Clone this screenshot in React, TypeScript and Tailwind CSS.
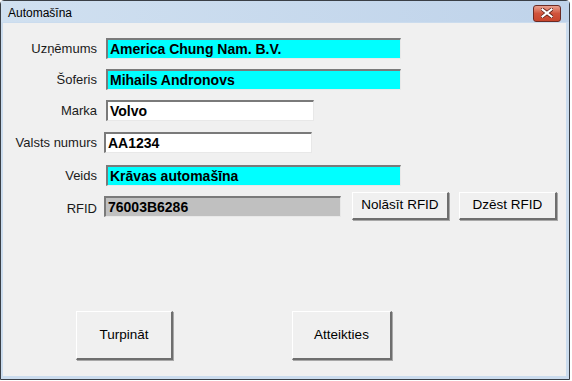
import type { ReactNode } from "react";

const sunken =
  "h-[21px] border-t-2 border-l-2 border-t-[#7a7a7a] border-l-[#7a7a7a] border-b border-r border-b-[#e8e8e8] border-r-[#e8e8e8] pl-[2px] flex items-center text-[14px] font-bold text-black leading-none";

const raised =
  "bg-[#f0f0f0] border-t border-l border-t-white border-l-white border-b-2 border-r-2 border-b-[#6e6e6e] border-r-[#6e6e6e] flex items-center justify-center text-[13.5px] text-black shadow-[1px_1px_0_#a8a8a8]";

function Row({
  label,
  top,
  children,
}: {
  label: string;
  top: string;
  children: ReactNode;
}) {
  return (
    <div className={`flex items-center ${top}`}>
      <div className="w-[94px] text-right text-[13px] text-[#1a1a1a] leading-none">{label}</div>
      {children}
    </div>
  );
}

export default function App() {
  return (
    <div
      className="w-[572px] h-[381px] bg-white overflow-hidden"
      style={{ fontFamily: '"Liberation Sans", Arial, sans-serif' }}
    >
      <div className="w-[570px] h-[380px] flex flex-col border border-[#3a3f46] rounded-t-[4px] bg-[#cbdcee]">
        {/* title bar */}
        <div className="h-[21px] flex items-center justify-between bg-gradient-to-r from-[#d0e0f0] to-[#bfd3ea] pl-[7px] pr-[8px]">
          <span className="text-[12px] text-black leading-none mt-[2px]">Automašīna</span>
          <button className="w-[28px] h-[17px] mt-[3px] rounded-[3px] border border-[#6b2b24] bg-gradient-to-b from-[#e8a08e] via-[#d0533c] to-[#c8452c] flex items-center justify-center">
            <svg width="12" height="10" viewBox="0 0 12 10">
              <path d="M1.5 1.5 L10.5 8.5 M10.5 1.5 L1.5 8.5" stroke="#5a1a12" strokeWidth="3.6" strokeLinecap="square" />
              <path d="M1.5 1.5 L10.5 8.5 M10.5 1.5 L1.5 8.5" stroke="#ffffff" strokeWidth="2.2" strokeLinecap="square" />
            </svg>
          </button>
        </div>
        {/* client area */}
        <div className="flex-1 ml-[2px] mr-[3px] mb-[3px] mt-[1px] bg-[#f0f0f0] flex flex-col">
          <Row label="Uzņēmums" top="mt-[15px]">
            <div className={`${sunken} ml-[9px] w-[295px] bg-[#00ffff]`}>America Chung Nam. B.V.</div>
          </Row>
          <Row label="Šoferis" top="mt-[10px]">
            <div className={`${sunken} ml-[9px] w-[295px] bg-[#00ffff]`}>Mihails Andronovs</div>
          </Row>
          <Row label="Marka" top="mt-[10px]">
            <div className={`${sunken} ml-[9px] w-[208px] bg-white`}>Volvo</div>
          </Row>
          <Row label="Valsts numurs" top="mt-[11px]">
            <div className={`${sunken} ml-[7px] w-[208px] bg-white`}>AA1234</div>
          </Row>
          <Row label="Veids" top="mt-[12px]">
            <div className={`${sunken} ml-[9px] w-[295px] bg-[#00ffff]`}>Krāvas automašīna</div>
          </Row>
          <div className="flex items-start mt-[6px]">
            <div className="w-[94px] text-right text-[13px] text-[#1a1a1a] leading-none mt-[10px]">RFID</div>
            <div className={`${sunken} ml-[7px] mt-[4px] w-[237px] bg-[#c0c0c0] text-[#202020]`}>76003B6286</div>
            <button className={`${raised} ml-[11px] w-[97px] h-[28px]`}>Nolāsīt RFID</button>
            <button className={`${raised} ml-[10px] w-[98px] h-[28px]`}>Dzēst RFID</button>
          </div>
          <div className="flex mt-[91px]">
            <button className={`${raised} ml-[73px] w-[97px] h-[49px]`}>Turpināt</button>
            <button className={`${raised} ml-[119px] w-[100px] h-[49px]`}>Atteikties</button>
          </div>
        </div>
      </div>
    </div>
  );
}
